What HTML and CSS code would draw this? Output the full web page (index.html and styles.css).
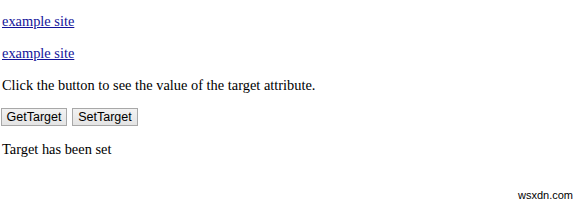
FILE: index.html
```html
<!DOCTYPE html>
<html lang="en">
<head>
  <meta charset="UTF-8">
  <title>Target attribute</title>
  <link rel="stylesheet" href="styles.css">
</head>
<body>
  <p><a href="#" id="link1">example site</a></p>
  <p><a href="#" id="link2">example site</a></p>
  <p>Click the button to see the value of the target attribute.</p>
  <div class="buttons">
    <button>GetTarget</button>
    <button>SetTarget</button>
  </div>
  <p class="result">Target has been set</p>
  <div class="watermark">wsxdn.com</div>
</body>
</html>
```

FILE: styles.css
```css
body {
  margin: 0;
  padding: 12px 2px 0 2px;
  font-family: 'Liberation Serif', serif;
  font-size: 14.4px;
  color: #000;
  background: #fff;
  position: relative;
  height: 198px;
}

p {
  margin: 0 0 14px 0;
  line-height: 18px;
}

a {
  color: #14149a;
}

.buttons {
  display: flex;
  gap: 5px;
  margin: 0 0 14px -1px;
}

.buttons button {
  font-family: 'Liberation Sans', sans-serif;
  font-size: 12.5px;
  width: 66px;
  height: 18px;
  padding: 0;
  color: #000;
  background: linear-gradient(#f2f2f2, #e4e4e4);
  border: 1px solid #a8a8a8;
  border-radius: 0;
}

.watermark {
  position: absolute;
  right: 13px;
  bottom: 9px;
  font-family: 'Liberation Sans', sans-serif;
  font-size: 11px;
}
```
